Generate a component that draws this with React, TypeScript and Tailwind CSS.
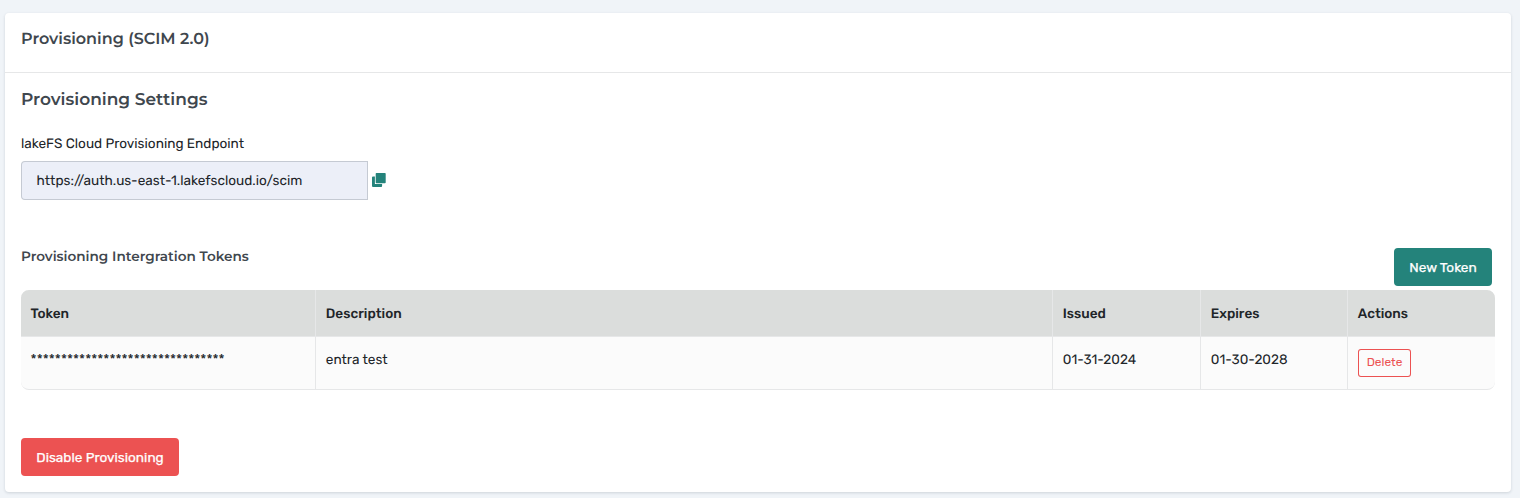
import React from "react";

const heading = "font-['Montserrat','Inter',sans-serif] font-semibold text-[#3f474e] whitespace-nowrap";

const columns = ["Token", "Description", "Issued", "Expires", "Actions"];

const token = ["********************************", "entra test", "01-31-2024", "01-30-2028"];

const grid = "grid grid-cols-[295px_737px_148px_147px_147px]";

function CopyIcon() {
  return (
    <svg className="-mt-[2px]" width="14" height="14" viewBox="0 0 14 14" aria-hidden="true">
      <path d="M1 3.6h1.9v7.3h7.2V13a1 1 0 0 1-1 1H1a1 1 0 0 1-1-1V4.6a1 1 0 0 1 1-1z" fill="#24837b" />
      <rect x="3.7" y="0" width="10" height="10.2" rx="0.8" fill="#24837b" />
    </svg>
  );
}

export default function App() {
  return (
    <div className="h-[498px] bg-[#f0f4f8] pt-[13px] pl-[5px] pr-[9px] font-['Rubik','Roboto',sans-serif] text-[13.6px] leading-[20.4px] text-[#212529] [text-rendering:geometricPrecision]">
      <main className="flex h-[479px] rotate-[0.0001deg] flex-col rounded bg-white shadow-[0_1px_3px_rgba(31,45,61,0.16)]">
        <header className="h-[60px] shrink-0 border-b border-[#e6e7e8] px-4 pt-4">
          <h1 className={`${heading} text-[16px] leading-[22px]`}>Provisioning (SCIM 2.0)</h1>
        </header>
        <div className="flex flex-col items-start pl-4">
          <h2 className={`${heading} mt-[15px] text-[17px] leading-6`}>Provisioning Settings</h2>
          <label className="mt-[22px] h-5">lakeFS Cloud Provisioning Endpoint</label>
          <div className="mt-[7px] flex items-center gap-1">
            <div className="flex h-[39px] w-[347px] items-center rounded-l border border-[#c5cad3] bg-[#eceff8] pt-[2px] pl-[14.6px]">
              https://auth.us-east-1.lakefscloud.io/scim
            </div>
            <CopyIcon />
          </div>
          <div className="mt-12 flex h-[38px] w-[1471px] items-start justify-between">
            <h3 className={`${heading} pt-px text-[13.6px] leading-[17px]`}>Provisioning Intergration Tokens</h3>
            <button className="h-[38px] w-[98px] rounded bg-[#24837b] pt-px text-center text-white whitespace-nowrap [-webkit-text-stroke:0.25px_white]">New Token</button>
          </div>
          <div className="mt-1 w-[1474px] overflow-hidden rounded-lg border-b border-[#e6e7e8] bg-[#fbfbfb]">
            <div className={`${grid} h-[47px] border-b border-[#e6e7e8] bg-[#dbdddc] font-medium`}>
              {columns.map((label) => (
                <div key={label} className="border-r border-[#e6e7e8] pt-[14px] pl-[9.8px] first:pl-[9.6px] last:border-r-0">
                  {label}
                </div>
              ))}
            </div>
            <div className={`${grid} h-[52px]`}>
              {token.map((value) => (
                <div key={value} className="border-r border-[#e6e7e8] pt-[13px] pl-[9.8px] first:pl-[9.6px]">{value}</div>
              ))}
              <div className="pt-3 pl-[10px]">
                <button className="block h-[28px] w-[53px] rounded-[3px] border border-[#ec5252] pb-[2px] text-center text-[11.9px] leading-4 text-[#ec5252]">Delete</button>
              </div>
            </div>
          </div>
          <button className="mt-12 h-[38px] w-[158px] rounded bg-[#ec5252] pt-px text-center text-white whitespace-nowrap [-webkit-text-stroke:0.25px_white]">Disable Provisioning</button>
        </div>
      </main>
    </div>
  );
}
